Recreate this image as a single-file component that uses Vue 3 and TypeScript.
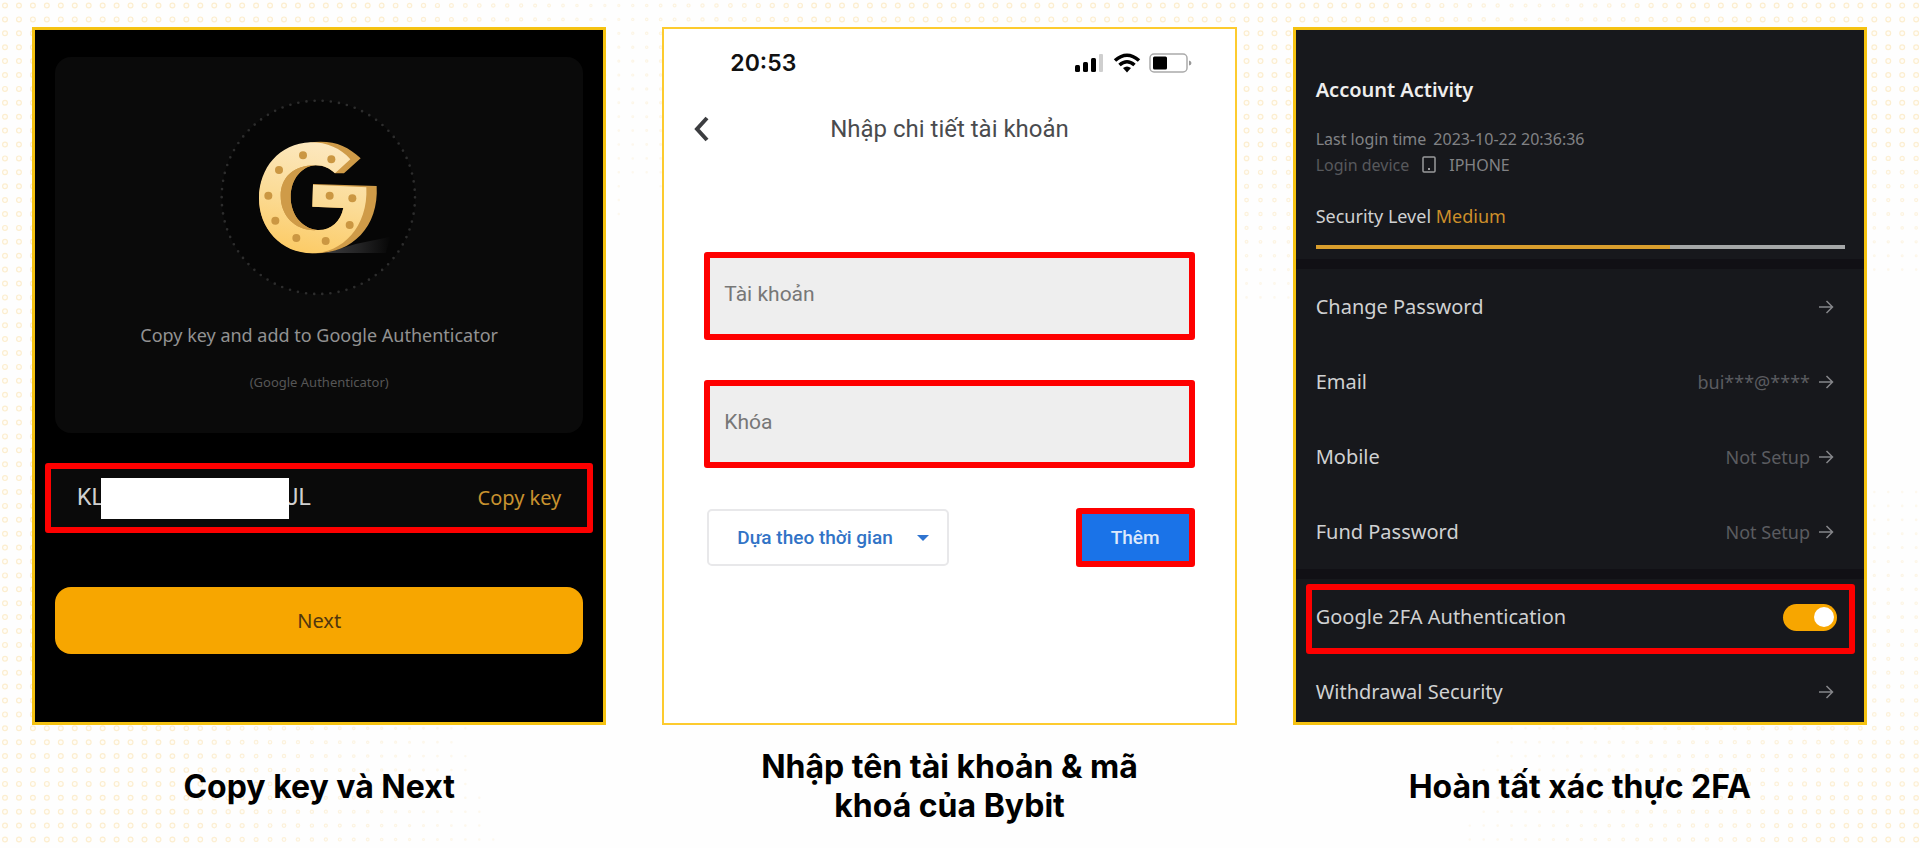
<script setup lang="ts">
import { ref } from 'vue'

interface Dot {
  x: number
  y: number
  r: number
  o: number
}

interface Setting {
  label: string
  value: string
}

const settings: Setting[] = [
  { label: 'Change Password', value: '' },
  { label: 'Email', value: 'bui***@****' },
  { label: 'Mobile', value: 'Not Setup' },
  { label: 'Fund Password', value: 'Not Setup' },
]

const account = ref('')
const secret = ref('')
const mode = ref('time')
const twoFactor = ref(true)
const securityLevel = ref(67)

// Halftone strength: a few soft zones along the edges of the sheet.
function ellipse(x: number, y: number, cx: number, cy: number, rx: number, ry: number, gain: number): number {
  return (1 - Math.hypot((x - cx) / rx, (y - cy) / ry)) * gain
}

function strength(x: number, y: number): number {
  const left = (480 + Math.abs(y - 740) * 0.3 - x) / 330
  const top = ellipse(x, y, 1100, 0, 560, 330, 2)
  const topRight = ellipse(x, y, 1900, 0, 460, 290, 1.8)
  const bottomRight = ellipse(x, y, 1920, 900, 480, 430, 1.2)
  return Math.min(1, Math.max(left, top, topRight, bottomRight))
}

const dots: Dot[] = []
for (let row = 0; row < 61; row++) {
  for (let col = 0; col < 138; col++) {
    const x = 5 + col * 13.95
    const y = 5.5 + row * 13.9
    const s = strength(x, y)
    if (s > 0.05) dots.push({ x, y, r: 0.5 + s * 1.9, o: 0.3 + s * 0.7 })
  }
}
</script>

<template>
  <main class="sheet">
    <svg class="halftone" viewBox="0 0 1920 848" preserveAspectRatio="xMidYMid slice" aria-hidden="true">
      <circle v-for="(d, i) in dots" :key="i" :cx="d.x" :cy="d.y" :r="d.r" :opacity="d.o" />
    </svg>

    <figure class="step">
      <section class="card key-card">
        <div class="panel">
          <svg class="logo" viewBox="0 0 660 660" aria-hidden="true">
            <defs>
              <linearGradient id="face" x1="0.6" y1="0" x2="0.4" y2="1">
                <stop offset="0" stop-color="#fce8c0" />
                <stop offset="0.5" stop-color="#fbdc98" />
                <stop offset="1" stop-color="#fccb66" />
              </linearGradient>
              <linearGradient id="shade" x1="0" y1="0" x2="1" y2="0">
                <stop offset="0" stop-color="#3c3c3e" />
                <stop offset="0.5" stop-color="#242425" />
                <stop offset="1" stop-color="#060606" />
              </linearGradient>
            </defs>
            <circle cx="328" cy="322" r="290" fill="#060606" stroke="#2d2d2d" stroke-width="8" stroke-linecap="round" stroke-dasharray="0 24.6" />
            <path d="M350 489L440 462L545 440L530 489Z" fill="url(#shade)" />
            <path
              d="M455 205C420 172 385 155 335 155C230 155 150 230 150 325C150 415 215 490 320 490C430 490 510 410 503 288L312 282L310 350L403 354C395 395 365 422 325 420C275 415 245 370 245 322C245 265 280 228 320 226C345 226 362 235 378 250L405 250Z"
              fill="#cf9b48"
            />
            <path
              d="M424 208C395 175 355 157 305 157C210 160 150 235 150 325C150 415 215 490 310 490C400 490 478 410 472 292L312 284L310 350L403 354C395 395 365 422 325 420C262 425 215 380 215 318C215 265 250 226 320 226C345 226 362 235 378 250Z"
              fill="url(#face)"
            />
            <path d="M325 420C262 425 215 380 215 318C215 265 250 226 320 226C280 228 245 265 245 322C245 370 275 415 325 420Z" fill="#cf9b48" />
            <g fill="#cb9742">
              <circle cx="282" cy="196" r="12" />
              <circle cx="367" cy="208" r="12" />
              <circle cx="210" cy="240" r="12" />
              <circle cx="178" cy="317" r="12" />
              <circle cx="362" cy="317" r="12" />
              <circle cx="430" cy="325" r="12" />
              <circle cx="199" cy="392" r="12" />
              <circle cx="422" cy="405" r="12" />
              <circle cx="262" cy="444" r="12" />
              <circle cx="350" cy="453" r="12" />
            </g>
          </svg>
          <p class="panel-text">Copy key and add to Google Authenticator</p>
          <p class="panel-note">(Google Authenticator)</p>
        </div>
        <div class="key-row marked">
          <span class="key">KL<span class="redacted"></span>JL</span>
          <button type="button" class="copy">Copy key</button>
        </div>
        <button type="button" class="next">Next</button>
      </section>
      <figcaption><span class="caption">Copy key và Next</span></figcaption>
    </figure>

    <figure class="step">
      <section class="card form-card">
        <div class="status">
          <span class="clock">20:53</span>
          <svg class="status-icons" viewBox="0 0 118 22" aria-hidden="true">
            <rect x="1" y="13" width="5" height="7" rx="1.500" />
            <rect x="9" y="10" width="5" height="10" rx="1.500" />
            <rect x="17" y="6" width="5" height="14" rx="1.500" />
            <rect x="25" y="2" width="4" height="18" rx="1" fill="#cfcfcf" />
            <g fill="none" stroke="#000" stroke-width="3.6">
              <path d="M41 8.500Q53 -2 65 8.500" />
              <path d="M45.500 13Q53 6.500 60.500 13" />
            </g>
            <path d="M49 16Q53 13 57 16L53 20.500Z" />
            <rect x="76" y="2" width="37" height="18" rx="4" fill="none" stroke="#aaa" stroke-width="1.500" />
            <rect x="79" y="4.500" width="14" height="13" rx="1.500" />
            <path d="M115 8.500Q117.500 9 117.500 11Q117.500 13 115 13.500Z" fill="#999" />
          </svg>
        </div>
        <header class="nav">
          <button type="button" class="back" aria-label="Quay lại">
            <svg viewBox="0 0 16 26" aria-hidden="true">
              <path d="M14 2L4 13L14 24" fill="none" stroke="#3c3d40" stroke-width="4" />
            </svg>
          </button>
          <h2 class="nav-title">Nhập chi tiết tài khoản</h2>
        </header>
        <form class="form" @submit.prevent>
          <div class="field marked">
            <label for="account">Tài khoản</label>
            <input id="account" v-model="account" type="text" />
          </div>
          <div class="field marked">
            <label for="secret">Khóa</label>
            <input id="secret" v-model="secret" type="text" />
          </div>
          <div class="actions">
            <div class="picker">
              <select v-model="mode" aria-label="Loại khóa">
                <option value="time">Dựa theo thời gian</option>
              </select>
              <svg class="caret" viewBox="0 0 12 6" aria-hidden="true"><path d="M0 0H12L6 6Z" fill="#2f74d0" /></svg>
            </div>
            <button type="submit" class="add marked">Thêm</button>
          </div>
        </form>
      </section>
      <figcaption><span class="caption">Nhập tên tài khoản &amp; mã khoá của Bybit</span></figcaption>
    </figure>

    <figure class="step">
      <section class="card account-card">
        <div class="activity">
          <h2 class="activity-title">Account Activity</h2>
          <p class="meta"><span>Last login time</span><span>2023-10-22 20:36:36</span></p>
          <p class="meta device">
            <span class="dim">Login device</span>
            <svg class="phone" viewBox="0 0 14 18" aria-hidden="true">
              <rect x="1" y="1" width="12" height="15" rx="1" fill="none" stroke="#9a9a9c" stroke-width="1.500" />
              <rect x="6" y="12" width="2" height="2" fill="#9a9a9c" />
            </svg>
            <span>IPHONE</span>
          </p>
          <p class="level">Security Level <span class="medium">Medium</span></p>
          <div class="bar"><div class="bar-fill" :style="{ width: securityLevel + '%' }"></div></div>
        </div>
        <nav class="group" aria-label="Account settings">
          <a v-for="item in settings" :key="item.label" href="#" class="row">
            <span>{{ item.label }}</span>
            <span class="value">{{ item.value }}</span>
            <svg class="arrow" viewBox="0 0 16 16" aria-hidden="true"><path d="M1 8H14M8.500 2L14.500 8L8.500 14" /></svg>
          </a>
        </nav>
        <div class="group">
          <div class="toggle-row marked">
            <label for="two-factor">Google 2FA Authentication</label>
            <input id="two-factor" v-model="twoFactor" type="checkbox" role="switch" />
          </div>
          <a href="#" class="row last">
            <span>Withdrawal Security</span>
            <span class="value"></span>
            <svg class="arrow" viewBox="0 0 16 16" aria-hidden="true"><path d="M1 8H14M8.500 2L14.500 8L8.500 14" /></svg>
          </a>
        </div>
      </section>
      <figcaption><span class="caption">Hoàn tất xác thực 2FA</span></figcaption>
    </figure>
  </main>
</template>

<style>
body {
  margin: 0;
  background: #fefefe;
}
</style>

<style scoped>
* {
  box-sizing: border-box;
}

p,
h2,
figure {
  margin: 0;
}

button,
input,
select {
  font: inherit;
  margin: 0;
}

.sheet {
  position: relative;
  display: grid;
  grid-template-columns: repeat(3, minmax(0, 1fr));
  gap: 56px;
  min-height: 100vh;
  padding: 27px 53px 0 32px;
  background: #fefefe;
  font-family: 'Noto Sans', 'Open Sans', sans-serif;
}

.halftone {
  position: absolute;
  inset: 0;
  width: 100%;
  height: 100%;
  fill: #fffdf8;
  stroke: #fceed0;
  stroke-width: 1.2;
}

.step {
  position: relative;
  display: flex;
  flex-direction: column;
}

.card {
  flex: none;
  border: 3px solid #f5c211;
}

.marked {
  border: 6px solid #fe0000;
  border-radius: 3px;
}

figcaption {
  display: flex;
  align-items: center;
  justify-content: center;
  min-height: 122px;
}

.caption {
  max-width: 420px;
  font-family: Inter, sans-serif;
  font-size: 32px;
  font-weight: 700;
  line-height: 39px;
  text-align: center;
  color: #000;
}

/* Key card */
.key-card {
  display: flex;
  flex-direction: column;
  padding: 27px 20px 68px;
  background: #000;
}

.panel {
  display: flex;
  flex-direction: column;
  align-items: center;
  padding: 33px 0 41px;
  border-radius: 16px;
  background: #0a0a0a;
}

.logo {
  width: 220px;
  height: 220px;
}

.panel-text {
  margin-top: 11px;
  font-size: 18px;
  line-height: 28px;
  color: #929292;
}

.panel-note {
  margin-top: 23px;
  font-size: 13px;
  line-height: 20px;
  color: #565656;
}

.key-row {
  display: flex;
  align-items: center;
  justify-content: space-between;
  height: 70px;
  margin: 30px -10px 0;
  padding: 0 26px;
  background: #0a0a0a;
}

.key {
  display: flex;
  align-items: center;
  font-family: Roboto, sans-serif;
  font-size: 23px;
  line-height: 30px;
  color: #d0d0d0;
}

.redacted {
  width: 188px;
  height: 41px;
  margin: 0 -3px;
  background: #fff;
  z-index: 1;
}

.copy {
  padding: 0;
  border: 0;
  background: none;
  font-size: 20px;
  line-height: 30px;
  color: #c8922f;
}

.next {
  height: 67px;
  margin-top: 54px;
  border: 0;
  border-radius: 16px;
  background: #f7a600;
  font-size: 20px;
  color: #50360f;
}

/* Form card */
.form-card {
  height: 698px;
  border-width: 2px;
  border-color: #fdcb2e;
  background: #fff;
}

.status {
  display: flex;
  align-items: center;
  justify-content: space-between;
  padding: 18px 43px 0 66px;
}

.clock {
  font-family: Inter, sans-serif;
  font-size: 23px;
  font-weight: 600;
  line-height: 32px;
  color: #111;
}

.status-icons {
  width: 118px;
  height: 22px;
}

.nav {
  display: grid;
  grid-template-columns: 30px 1fr 30px;
  align-items: center;
  margin-top: 34px;
  padding: 0 29px;
}

.back {
  display: flex;
  padding: 0;
  border: 0;
  background: none;
}

.back svg {
  width: 16px;
  height: 26px;
}

.nav-title {
  font-family: Roboto, sans-serif;
  font-size: 24px;
  font-weight: 400;
  line-height: 32px;
  text-align: center;
  color: #4a4b4e;
}

.form {
  display: flex;
  flex-direction: column;
  gap: 40px;
  padding: 107px 40px 0;
  font-family: Roboto, sans-serif;
}

.field {
  display: flex;
  align-items: center;
  gap: 12px;
  height: 88px;
  padding: 0 14px 4px;
  background: #eee;
}

.field label {
  font-size: 21px;
  line-height: 28px;
  color: #777;
}

.field input {
  flex: 1;
  min-width: 0;
  height: 40px;
  border: 0;
  outline: 0;
  background: none;
  font-size: 21px;
}

.actions {
  display: flex;
  align-items: center;
  justify-content: space-between;
}

.picker {
  position: relative;
  margin-left: 3px;
}

.picker select {
  width: 242px;
  height: 57px;
  padding: 0 28px;
  border: 2px solid #e8e8ea;
  border-radius: 5px;
  background: #fff;
  font-size: 19px;
  font-weight: 500;
  color: #3173c6;
  appearance: none;
}

.caret {
  position: absolute;
  top: 26px;
  right: 20px;
  width: 12px;
  height: 6px;
  pointer-events: none;
}

.add {
  width: 119px;
  height: 59px;
  padding: 0;
  background: #1a73e8;
  font-size: 19px;
  font-weight: 500;
  color: #dce9fc;
}

/* Account card */
.account-card {
  background: #17181c;
  color: #d0d1d2;
}

.activity {
  padding: 46px 19px 10px 20px;
}

.activity-title {
  font-size: 20px;
  font-weight: 600;
  line-height: 28px;
  color: #eee;
}

.meta {
  display: flex;
  align-items: center;
  gap: 7px;
  margin-top: 22px;
  font-size: 16px;
  line-height: 26px;
  color: #818285;
}

.device {
  gap: 13px;
  margin-top: 0;
}

.dim {
  color: #58595c;
}

.phone {
  width: 14px;
  height: 18px;
}

.level {
  margin-top: 24px;
  font-size: 18px;
  line-height: 28px;
}

.medium {
  color: #cd8f2a;
}

.bar {
  height: 4px;
  margin-top: 15px;
  background: #a5a7a8;
}

.bar-fill {
  height: 4px;
  background: #d99e2d;
}

.group {
  border-top: 10px solid #111015;
}

.row {
  display: flex;
  align-items: center;
  height: 75px;
  padding: 0 30px 0 20px;
  font-size: 20px;
  line-height: 28px;
  color: inherit;
  text-decoration: none;
}

.last {
  height: 68px;
  padding-top: 8px;
}

.value {
  margin-left: auto;
  font-size: 18px;
  color: #5b5c60;
}

.arrow {
  width: 16px;
  height: 16px;
  margin-left: 8px;
  fill: none;
  stroke: #85868a;
  stroke-width: 1.5;
}

.toggle-row {
  display: flex;
  align-items: center;
  justify-content: space-between;
  height: 70px;
  margin: 5px 9px 0 10px;
  padding: 0 12px 4px 4px;
  font-size: 20px;
  line-height: 28px;
}

.toggle-row input {
  display: flex;
  align-items: center;
  justify-content: flex-end;
  width: 54px;
  height: 27px;
  padding: 3px;
  border-radius: 14px;
  background: #f7a600;
  appearance: none;
}

.toggle-row input::before {
  content: '';
  width: 20px;
  height: 20px;
  border-radius: 50%;
  background: #fff;
}

.toggle-row input:not(:checked) {
  justify-content: flex-start;
  background: #55565a;
}
</style>
